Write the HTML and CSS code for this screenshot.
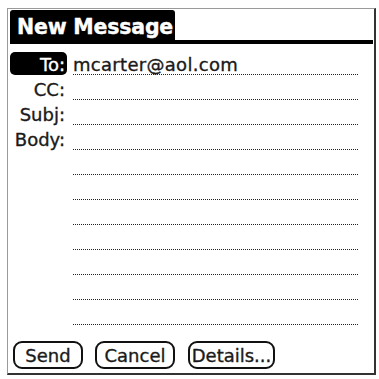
FILE: index.html
```html
<!DOCTYPE html>
<html>
<head>
<meta charset="utf-8">
<link rel="stylesheet" href="styles.css">
</head>
<body>
<div class="frame">
  <div class="header"><div class="title">New Message</div></div>
  <div class="fields">
    <div class="row"><div class="label sel">To:</div><div class="value">mcarter@aol.com</div></div>
    <div class="row"><div class="label">CC:</div><div class="value"></div></div>
    <div class="row"><div class="label">Subj:</div><div class="value"></div></div>
    <div class="row"><div class="label">Body:</div><div class="value"></div></div>
    <div class="row"><div class="label"></div><div class="value"></div></div>
    <div class="row"><div class="label"></div><div class="value"></div></div>
    <div class="row"><div class="label"></div><div class="value"></div></div>
    <div class="row"><div class="label"></div><div class="value"></div></div>
    <div class="row"><div class="label"></div><div class="value"></div></div>
    <div class="row"><div class="label"></div><div class="value"></div></div>
    <div class="row"><div class="label"></div><div class="value"></div></div>
  </div>
  <div class="buttons">
    <button class="btn send">Send</button>
    <button class="btn cancel">Cancel</button>
    <button class="btn details">Details...</button>
  </div>
</div>
</body>
</html>
```
FILE: styles.css
```css
body {
  margin: 0;
  background: #fff;
  font-family: "DejaVu Sans", sans-serif;
  color: #1a1a1a;
}
.frame {
  box-sizing: border-box;
  margin: 8px 0 0 7px;
  width: 369px;
  height: 367px;
  border-top: 1px solid #9a9a9a;
  border-left: 1px solid #9a9a9a;
  border-right: 2px solid #333;
  border-bottom: 2px solid #333;
  padding: 1px 1px 0 2px;
}
.header {
  display: flex;
  box-sizing: border-box;
  height: 34px;
  border-bottom: 4px solid #000;
}
.title {
  box-sizing: border-box;
  width: 165px;
  height: 30px;
  background: #000;
  color: #fff;
  font-weight: bold;
  font-size: 20.5px;
  line-height: 25px;
  padding: 5px 0 0 7px;
  border-radius: 3px 3px 0 0;
  white-space: nowrap;
  letter-spacing: -0.2px;
  -webkit-text-stroke: 0.4px #fff;
}
.fields {
  margin-top: 6px;
}
.row {
  display: flex;
  gap: 6px;
  height: 25px;
}
.label {
  box-sizing: border-box;
  width: 57px;
  height: 25px;
  text-align: right;
  padding: 4px 2px 0 0;
  font-size: 18px;
  line-height: 21px;
  -webkit-text-stroke: 0.35px #1a1a1a;
}
.label.sel {
  background: #000;
  color: #fff;
  border-radius: 5px;
  height: 23px;
  margin-top: 2px;
  padding-top: 2px;
  -webkit-text-stroke: 0.35px #fff;
}
.value {
  box-sizing: border-box;
  width: 285px;
  height: 25px;
  border-bottom: 1px dotted #222;
  padding-top: 4px;
  font-size: 18px;
  line-height: 21px;
  letter-spacing: 0.3px;
  white-space: nowrap;
  -webkit-text-stroke: 0.35px #1a1a1a;
}
.buttons {
  display: flex;
  gap: 12px;
  margin-top: 16px;
  padding-left: 3px;
}
.btn {
  box-sizing: border-box;
  height: 28px;
  border: 2px solid #111;
  border-radius: 9px;
  background: #fff;
  color: #1a1a1a;
  font-family: "DejaVu Sans", sans-serif;
  font-size: 18px;
  line-height: 22px;
  padding: 1px 0 0 0;
  text-align: center;
  -webkit-text-stroke: 0.35px #1a1a1a;
}
.send { width: 70px; }
.cancel { width: 80px; }
.details { width: 87px; margin-left: 1px; }
```
